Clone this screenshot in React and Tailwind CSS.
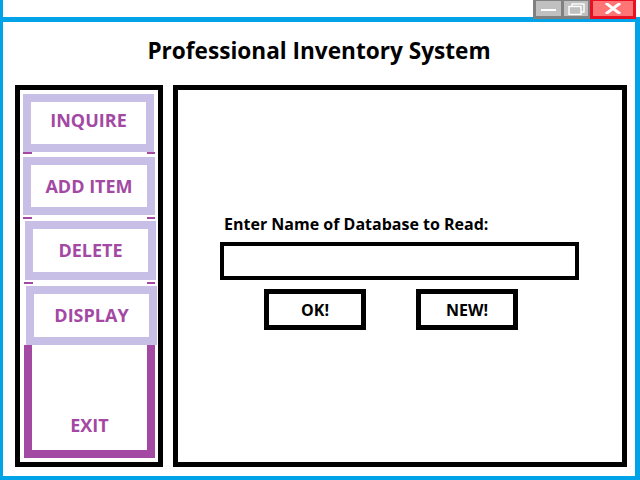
// App.jsx
import React from "react";

function MenuButton({ label, className, innerClassName = "" }) {
  return (
    <div className={`border-[8px] border-[#c8bfe7] bg-white ${className}`}>
      <div
        className={`flex h-full w-full items-center justify-center text-[18px] font-bold text-[#a349a4] ${innerClassName}`}
      >
        {label}
      </div>
    </div>
  );
}

// the little purple corners peeking out between the menu buttons
function Ticks({ className }) {
  return (
    <div className={`flex justify-between ${className}`}>
      <div className="h-[2px] w-[9px] bg-[#a349a4]" />
      <div className="h-[2px] w-[8px] bg-[#a349a4]" />
    </div>
  );
}

function WindowButtons() {
  return (
    <div className="absolute right-[4px] top-0 flex h-[19px]">
      <div className="h-full w-[30px] bg-[#808080] pb-[3px] pl-[3px] pr-[2px] pt-[1px]">
        <div className="flex h-full w-full items-center justify-center bg-[#c0c0c0]">
          <div className="mt-[3px] h-[2px] w-[15px] bg-white" />
        </div>
      </div>
      <div className="h-full w-[27px] bg-[#808080] pb-[3px] pl-[1px] pr-[2px] pt-[1px]">
        <div className="flex h-full w-full items-center justify-center bg-[#c0c0c0]">
          <svg width="17" height="12" viewBox="0 0 17 12">
            <rect x="4" y="1" width="12" height="8" fill="none" stroke="white" strokeWidth="1.4" />
            <rect x="1" y="3.5" width="12" height="8" fill="#c0c0c0" stroke="white" strokeWidth="1.4" />
          </svg>
        </div>
      </div>
      <div className="flex h-full w-[46px] items-center justify-center border-x-[3px] border-b-[3px] border-t-[1px] border-[#e81123] bg-[#ff7474]">
        <svg width="16" height="11" viewBox="0 0 16 11">
          <path d="M2 1 L14 10 M14 1 L2 10" stroke="white" strokeWidth="3" strokeLinecap="square" />
        </svg>
      </div>
    </div>
  );
}

export default function App() {
  return (
    <div className="relative flex h-[480px] w-[640px] flex-col border-l-[3px] border-[#00a2e8] bg-white font-['Open_Sans',sans-serif] text-black">
      <div className="h-[17px] shrink-0" />
      <WindowButtons />

      <div className="flex flex-1 flex-col border-b-[4px] border-r-[5px] border-t-[5px] border-[#00a2e8]">
        <h1 className="pt-[14px] text-center text-[22.6px] font-bold leading-[30px]">
          Professional Inventory System
        </h1>

        <div className="mt-[19px] flex flex-1 gap-[10px] pb-[9px] pl-[12px] pr-[8px]">
          {/* menu */}
          <div className="flex w-[148px] flex-col border-[5px] border-black">
            <MenuButton
              label="INQUIRE"
              className="ml-[3px] mt-[4px] h-[58px] w-[131px]"
              innerClassName="pb-[6px]"
            />
            <Ticks className="ml-[3px] h-[5px] w-[132px]" />
            <MenuButton label="ADD ITEM" className="ml-[3px] h-[58px] w-[132px]" />
            <Ticks className="ml-[3px] h-[6px] w-[132px] pt-[2px]" />
            <MenuButton label="DELETE" className="ml-[5px] h-[59px] w-[131px]" />
            <Ticks className="ml-[4px] h-[6px] w-[131px] pt-[2px]" />
            <MenuButton label="DISPLAY" className="ml-[6px] h-[59px] w-[131px]" />
            <div className="ml-[4px] flex h-[113px] w-[131px] items-end justify-center border-x-[8px] border-b-[8px] border-[#a349a4] pb-[11px] text-[18px] font-bold text-[#a349a4]">
              EXIT
            </div>
          </div>

          {/* main panel */}
          <div className="flex flex-1 flex-col border-[5px] border-black pl-[42px] pt-[124px]">
            <label className="ml-[4px] text-[16px] font-bold leading-[20px]">
              Enter Name of Database to Read:
            </label>
            <input
              type="text"
              className="mt-[8px] h-[38px] w-[359px] border-[4px] border-black bg-white px-2 text-[16px] outline-none"
            />
            <div className="ml-[44px] mt-[9px] flex gap-[50px]">
              <button className="flex h-[41px] w-[102px] items-center justify-center border-[5px] border-black bg-white text-[16px] font-bold">
                OK!
              </button>
              <button className="flex h-[41px] w-[102px] items-center justify-center border-[5px] border-black bg-white text-[16px] font-bold">
                NEW!
              </button>
            </div>
          </div>
        </div>
      </div>
    </div>
  );
}
